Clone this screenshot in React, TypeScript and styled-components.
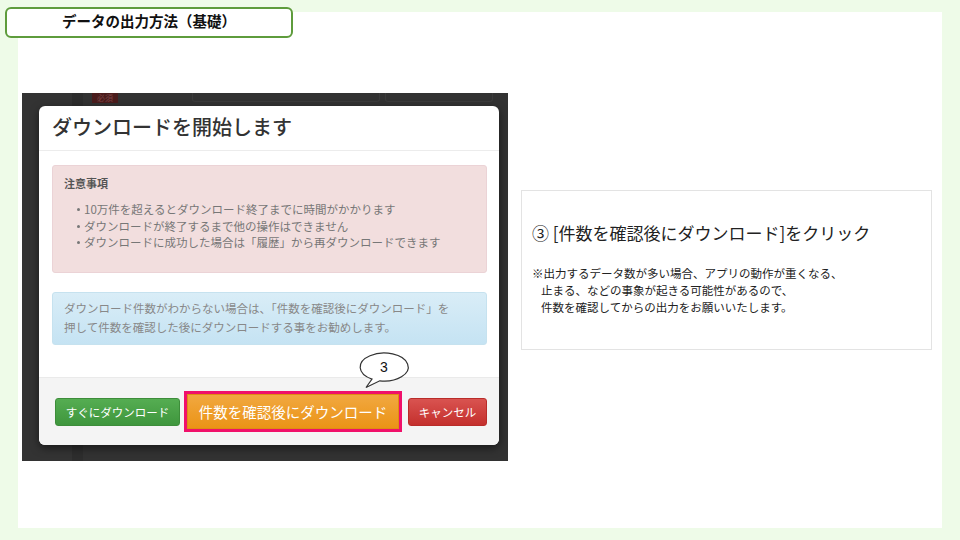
import styled, { createGlobalStyle } from "styled-components";

const GlobalStyle = createGlobalStyle`
  html, body {
    margin: 0;
    padding: 0;
    background: #eefbe8;
  }
  body {
    font-family: "Noto Sans CJK JP", "Noto Sans", sans-serif;
  }
`;

const cautions = [
  "10万件を超えるとダウンロード終了までに時間がかかります",
  "ダウンロードが終了するまで他の操作はできません",
  "ダウンロードに成功した場合は「履歴」から再ダウンロードできます",
];

const noteLines = [
  "※出力するデータ数が多い場合、アプリの動作が重くなる、",
  "止まる、などの事象が起きる可能性があるので、",
  "件数を確認してからの出力をお願いいたします。",
];

function Bubble({ label }: { label: string }) {
  return (
    <BubbleWrap>
      <svg width="54" height="40" viewBox="0 0 54 40">
        <path
          d="M 21.8 30.8 A 24 14 0 1 0 14 29.1 L 8 37.5 Z"
          fill="#fff"
          stroke="#333"
          strokeWidth="1.2"
        />
      </svg>
      <BubbleText>{label}</BubbleText>
    </BubbleWrap>
  );
}

function App() {
  return (
    <Page>
      <GlobalStyle />
      <TitleTag>データの出力方法（基礎）</TitleTag>
      <Slide>
        <Screenshot>
          <TopStrip>
            <RequiredBadge>必須</RequiredBadge>
            <GhostInput $width={186} />
            <GhostInput $width={106} />
          </TopStrip>
          <Modal>
            <ModalHeader>ダウンロードを開始します</ModalHeader>
            <ModalBody>
              <DangerAlert>
                <AlertTitle>注意事項</AlertTitle>
                <CautionList>
                  {cautions.map((c) => (
                    <li key={c}>{c}</li>
                  ))}
                </CautionList>
              </DangerAlert>
              <InfoAlert>
                ダウンロード件数がわからない場合は、「件数を確認後にダウンロード」を
                <br />
                押して件数を確認した後にダウンロードする事をお勧めします。
              </InfoAlert>
            </ModalBody>
            <ModalFooter>
              <Bubble label="3" />
              <Button $tone="green">すぐにダウンロード</Button>
              <Highlight>
                <Button $tone="orange" $big>
                  件数を確認後にダウンロード
                </Button>
              </Highlight>
              <Button $tone="red">キャンセル</Button>
            </ModalFooter>
          </Modal>
        </Screenshot>
        <ExplainPanel>
          <ExplainTitle>③ [件数を確認後にダウンロード]をクリック</ExplainTitle>
          <Note>
            {noteLines.map((line, i) => (
              <NoteLine key={line} $indent={i > 0}>
                {line}
              </NoteLine>
            ))}
          </Note>
        </ExplainPanel>
      </Slide>
    </Page>
  );
}

const Page = styled.div`
  position: relative;
  width: 960px;
  height: 540px;
  box-sizing: border-box;
  padding: 12px 18px;
  background: #eefbe8;
  overflow: hidden;
`;

const TitleTag = styled.div`
  position: absolute;
  left: 5px;
  top: 7px;
  width: 288px;
  height: 31px;
  box-sizing: border-box;
  border: 2px solid #5e9c3c;
  border-radius: 6px;
  background: #fff;
  display: flex;
  align-items: center;
  justify-content: center;
  font-size: 14.5px;
  font-weight: 700;
  color: #111;
  padding-bottom: 4px;
`;

const Slide = styled.div`
  width: 924px;
  height: 516px;
  background: #fff;
  display: flex;
  align-items: flex-start;
`;

const Screenshot = styled.div`
  margin: 81px 0 0 4px;
  width: 486px;
  height: 368px;
  box-sizing: border-box;
  padding: 0 9px 16px 17px;
  background: linear-gradient(
    to right,
    #333 0 50px,
    #2d2d2d 50px 61px,
    #323232 61px
  );
  display: flex;
  flex-direction: column;
`;

const TopStrip = styled.div`
  height: 13px;
  display: flex;
  align-items: flex-start;
  gap: 5px;
  padding-left: 53px;
`;

const RequiredBadge = styled.span`
  width: 26px;
  height: 10px;
  margin-right: 69px;
  background: #4a1c1c;
  color: #7a4444;
  font-size: 8px;
  line-height: 10px;
  text-align: center;
`;

const GhostInput = styled.span<{ $width: number }>`
  width: ${(p) => p.$width}px;
  height: 8px;
  border: 1px solid #3b3b3b;
  border-top: none;
  border-radius: 0 0 3px 3px;
`;

const Modal = styled.div`
  width: 460px;
  height: 339px;
  background: #fff;
  border-radius: 6px;
  box-shadow: 0 3px 8px rgba(0, 0, 0, 0.5);
  display: flex;
  flex-direction: column;
`;

const ModalHeader = styled.div`
  height: 45px;
  flex-shrink: 0;
  box-sizing: border-box;
  padding: 0 13px 3px;
  border-bottom: 1px solid #ececec;
  display: flex;
  align-items: center;
  font-size: 20px;
  font-weight: 500;
  color: #333;
`;

const ModalBody = styled.div`
  flex: 1;
  padding: 14px 12px 0 13px;
  display: flex;
  flex-direction: column;
  gap: 19px;
`;

const DangerAlert = styled.div`
  height: 108px;
  box-sizing: border-box;
  padding: 9px 11px;
  background: #f2dede;
  border: 1px solid #ebd3d6;
  border-radius: 3px;
  color: #777;
`;

const AlertTitle = styled.div`
  font-size: 11px;
  font-weight: 700;
  color: #555;
  line-height: 16px;
`;

const CautionList = styled.ul`
  margin: 10px 0 0;
  padding-left: 13px;
  list-style: none;
  font-size: 11.5px;
  line-height: 16.5px;
  color: #777;
  li {
    position: relative;
    padding-left: 7px;
  }
  li::before {
    content: "";
    position: absolute;
    left: 0;
    top: 7px;
    width: 3px;
    height: 3px;
    border-radius: 50%;
    background: #777;
  }
`;

const InfoAlert = styled.div`
  height: 53px;
  box-sizing: border-box;
  padding: 6px 11px;
  background: linear-gradient(to bottom, #d9edf7, #c5e3f3);
  border: 1px solid #c6e2ef;
  border-radius: 3px;
  font-size: 11.5px;
  line-height: 19px;
  color: #888;
`;

const ModalFooter = styled.div`
  position: relative;
  height: 68px;
  flex-shrink: 0;
  box-sizing: border-box;
  padding-left: 16px;
  background: #f4f4f4;
  border-top: 1px solid #eaeaea;
  border-radius: 0 0 6px 6px;
  display: flex;
  align-items: center;
  gap: 4px;
`;

const BubbleWrap = styled.div`
  position: absolute;
  left: 319px;
  top: -28px;
  width: 54px;
  height: 40px;
  svg {
    display: block;
  }
`;

const BubbleText = styled.span`
  position: absolute;
  left: 0;
  top: 7px;
  width: 52px;
  text-align: center;
  font-family: "Liberation Sans", Arial, sans-serif;
  font-size: 14px;
  line-height: 20px;
  color: #111;
`;

const tones = {
  green: { top: "#55ad52", bottom: "#3f963d", border: "#3d8d3a", width: "125px" },
  orange: { top: "#f1a840", bottom: "#eb9316", border: "#e08b14", width: "212px" },
  red: { top: "#d95350", bottom: "#c4302d", border: "#b92c29", width: "79px" },
};

const Button = styled.div<{ $tone: keyof typeof tones; $big?: boolean }>`
  width: ${(p) => tones[p.$tone].width};
  height: ${(p) => (p.$big ? 35 : 28)}px;
  box-sizing: border-box;
  background: linear-gradient(
    to bottom,
    ${(p) => tones[p.$tone].top},
    ${(p) => tones[p.$tone].bottom}
  );
  border: 1px solid ${(p) => tones[p.$tone].border};
  border-radius: ${(p) => (p.$big ? 0 : 3)}px;
  display: flex;
  align-items: center;
  justify-content: center;
  color: #fff;
  font-size: ${(p) => (p.$big ? 14.5 : 11.5)}px;
  white-space: nowrap;
`;

const Highlight = styled.div`
  border: 3px solid #f0106a;
  margin-right: 2px;
`;

const ExplainPanel = styled.div`
  margin: 178px 0 0 13px;
  width: 411px;
  height: 160px;
  box-sizing: border-box;
  border: 1px solid #e3e3e3;
  padding: 30px 10px 0;
  color: #222;
`;

const ExplainTitle = styled.div`
  font-size: 17px;
  line-height: 24px;
  font-weight: 400;
`;

const Note = styled.div`
  margin-top: 20px;
  font-size: 11.5px;
  line-height: 17px;
`;

const NoteLine = styled.div<{ $indent: boolean }>`
  padding-left: ${(p) => (p.$indent ? 9 : 0)}px;
  white-space: nowrap;
`;

export default App;
